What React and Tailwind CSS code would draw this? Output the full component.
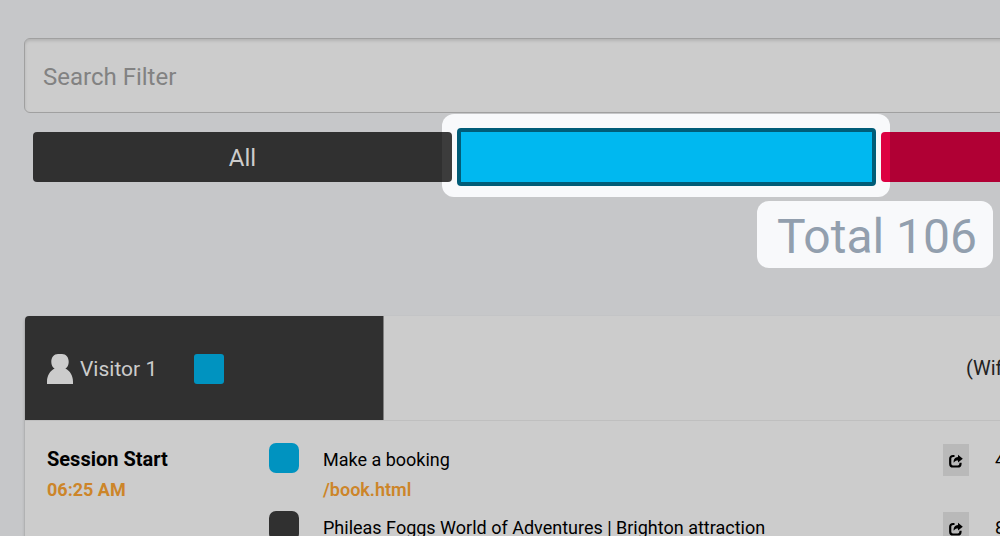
import React from "react";

const events = [
  { title: "Make a booking", path: "/book.html", duration: "4", swatch: "bg-[#0093c0]" },
  {
    title: "Phileas Foggs World of Adventures | Brighton attraction",
    path: "/",
    duration: "8",
    swatch: "bg-[#303030]",
  },
];

function PersonIcon() {
  return (
    <svg viewBox="0 0 26 30" className="h-[30px] w-[26px] fill-[#cccccc]" aria-hidden="true">
      <path d="M11 0C7 0 4.300 3.200 4.300 8C4.300 11 5.500 13.300 7.600 14.600C3 16.800 0 22 0 27.500V30H26V27.500C26 22 23 16.800 18.400 14.600C20.500 13.300 21.700 11 21.700 8C21.700 3.200 19 0 15 0Z" />
    </svg>
  );
}

function ShareIcon() {
  return (
    <svg viewBox="0 0 14 14" className="size-[14px]" aria-hidden="true">
      <path
        d="M5.500 2H4C2.300 2 1.200 3.100 1.200 4.800V9.700C1.200 11.400 2.300 12.500 4 12.500H8.700C10.400 12.500 11.500 11.400 11.500 9.700V8.800"
        fill="none"
        stroke="#000"
        strokeWidth="2.200"
      />
      <path d="M9 0.800L13.800 4.700L9 8.600V6.400C7 6.400 5.800 7 4.700 8.800C4.300 5.400 6 3.100 9 3Z" fill="#000" />
    </svg>
  );
}

export default function App() {
  return (
    <div className="min-h-screen overflow-hidden bg-[#c6c7c9] font-['Roboto',sans-serif]">
      <main className="w-[175%] px-6 pt-[38px]">
        <input
          type="text"
          aria-label="Search Filter"
          placeholder="Search Filter"
          className="block h-[75px] w-full rounded-md border border-[#a0a0a0] bg-[#cccccc] px-[18px] pt-[2px] text-[24px] text-[#303030] shadow-[inset_0_2px_3px_rgba(0,0,0,0.12)] outline-none placeholder:text-[#828282]"
        />

        <div className="mt-[15px] grid grid-cols-4 items-center gap-[5px] pr-[2px] pl-[9px]">
          <button
            type="button"
            className="h-[50px] rounded bg-[#303030] pt-[2px] text-[24px] text-[#cccccc]"
          >
            All
          </button>
          <div className="relative">
            <div className="absolute -top-[14px] -right-[14px] -bottom-[11px] -left-[15px] z-10 rounded-xl backdrop-brightness-125" />
            <button
              type="button"
              aria-label="Blue"
              className="relative z-20 block h-[58px] w-full rounded border-4 border-[#005c78] bg-[#00b8f0]"
            />
          </div>
          <button type="button" aria-label="Red" className="h-[50px] rounded bg-[#b00034]" />
          <button type="button" aria-label="Orange" className="h-[50px] rounded bg-[#cc8529]" />
        </div>

        <div className="mt-[15px] flex justify-center">
          <p className="rounded-xl bg-[#f8f9fb] pt-[4px] pr-4 pl-5 text-[48px] leading-[63px] text-[#929fae]">
            Total 106
          </p>
        </div>

        <section className="mt-12 ml-px rounded bg-[#cccccc] shadow-[0_2px_3px_rgba(0,0,0,0.3)]">
          <header className="flex h-[104px] items-center">
            <div className="flex h-full w-[359px] items-center rounded-tl border-r border-[#808080] bg-[#303030] pt-[2px] pl-[22px]">
              <PersonIcon />
              <h2 className="ml-[7px] w-[114px] pt-[2px] text-[21px] text-[#cccccc]">Visitor 1</h2>
              <span className="size-[30px] rounded-[3px] bg-[#0093c0]" />
            </div>
            <span className="ml-[582px] text-[20px] text-[#222222]">(Wifi)</span>
          </header>

          <div className="flex border-t border-[#bfbfbf] pt-[22px] pl-[22px]">
            <div className="w-[222px] font-bold">
              <h3 className="text-[20px] leading-8 text-black">Session Start</h3>
              <p className="text-[18px] leading-[30px] text-[#cc8529]">06:25 AM</p>
            </div>
            <ul>
              {events.map((event) => (
                <li key={event.title} className="flex h-[68px] items-start">
                  <span className={`size-[30px] rounded-[7px] ${event.swatch}`} />
                  <div className="ml-6 w-[620px] text-[18px]">
                    <p className="leading-[34px] text-black">{event.title}</p>
                    <a href="#" className="block leading-[26px] font-semibold text-[#cc8529]">
                      {event.path}
                    </a>
                  </div>
                  <button
                    type="button"
                    aria-label="Open page"
                    className="mt-px flex h-8 w-[26px] items-center justify-center bg-[#b9b9b9] pt-[2px]"
                  >
                    <ShareIcon />
                  </button>
                  <span className="ml-[26px] text-[18px] leading-[34px] text-black">
                    {event.duration}
                  </span>
                </li>
              ))}
            </ul>
          </div>
        </section>
      </main>
    </div>
  );
}
